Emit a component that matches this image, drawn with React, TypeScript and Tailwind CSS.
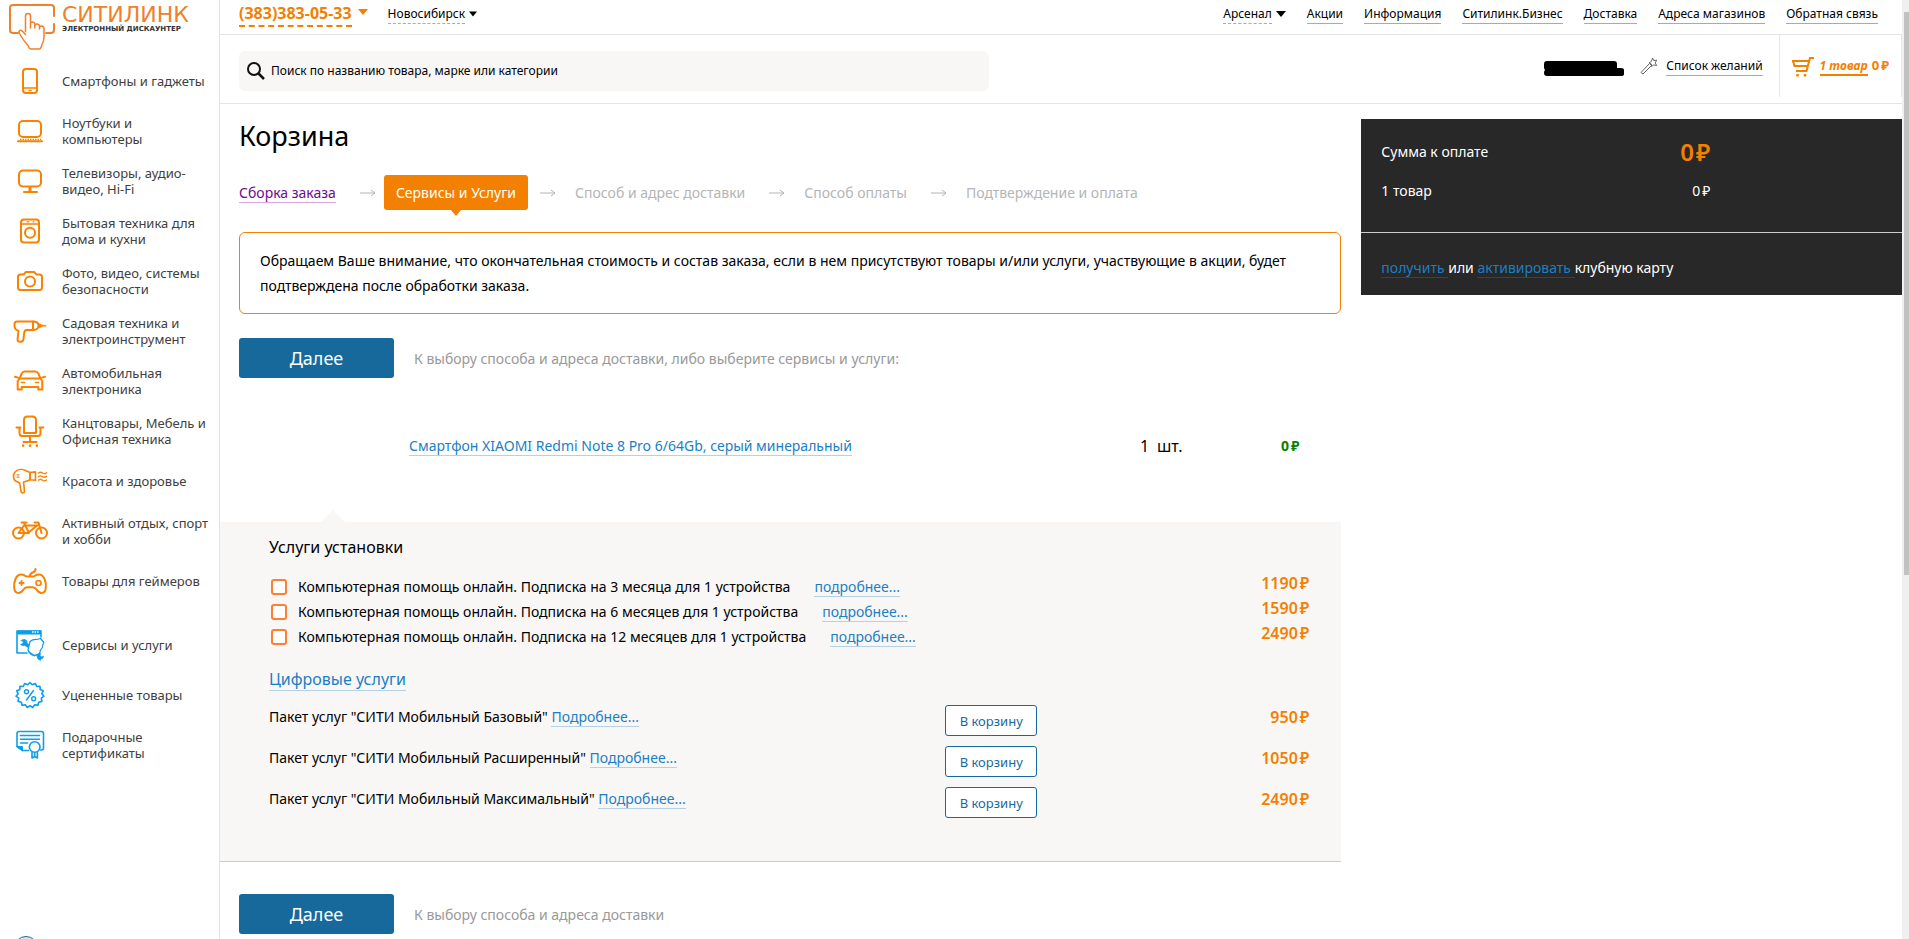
import type { ReactNode } from "react";

type Item = { label: string; icon: ReactNode };

const categories: Item[] = [
  {
    label: "Смартфоны и гаджеты",
    icon: (
      <>
        <rect x="13" y="8" width="14" height="24" rx="3" />
        <path d="M13 27h14M19 29.500h2" strokeWidth="1.500" />
      </>
    ),
  },
  {
    label: "Ноутбуки и компьютеры",
    icon: (
      <>
        <rect x="9" y="10" width="22" height="16" rx="4" />
        <path d="M10 28.500h21" strokeDasharray="1.500 1" strokeLinecap="butt" strokeWidth="1.500" />
        <path d="M8 30.300h24" />
      </>
    ),
  },
  {
    label: "Телевизоры, аудио-видео, Hi-Fi",
    icon: (
      <>
        <rect x="9" y="9.500" width="22" height="16" rx="4" />
        <path d="M14 31h13" />
        <path d="M20 26v4" strokeWidth="3" strokeLinecap="butt" />
      </>
    ),
  },
  {
    label: "Бытовая техника для дома и кухни",
    icon: (
      <>
        <rect x="11" y="8.500" width="18" height="23" rx="3" />
        <path d="M11 13h18M17 10.800h2M23 10.800h1" strokeWidth="1.300" />
        <circle cx="20" cy="21.700" r="5" />
      </>
    ),
  },
  {
    label: "Фото, видео, системы безопасности",
    icon: (
      <>
        <path d="M10.500 13.500h2.500q1 0 1.500-1l.5-.7q.5-.8 1.500-.8h7q1 0 1.500.8l.5.7q.5 1 1.500 1h2.500q2.500 0 2.500 2.500v10.500q0 2.500-2.500 2.500h-19q-2.500 0-2.500-2.500V16q0-2.500 2.500-2.500z" />
        <circle cx="20" cy="20.500" r="5" />
      </>
    ),
  },
  {
    label: "Садовая техника и электроинструмент",
    icon: (
      <>
        <path d="M7 10.500h16c3 0 5.500 1.500 5.500 4.200s-2.500 4.300-5.500 4.300h-6c-1.800 0-2.500.8-2.700 2.500l-.8 6.500c-.2 2-.8 2.700-2.500 2.700h-1c-1.800 0-2.600-.8-2.400-2.700l.9-8C6 19 4.500 17.500 4.500 15v-2c0-1.700.8-2.500 2.500-2.500z" />
        <path d="M23 10.500V19" />
        <path d="M29 12.500l4 1.800h3v1h-3l-4 1.700z" fill="currentColor" strokeWidth=".5" />
      </>
    ),
  },
  {
    label: "Автомобильная электроника",
    icon: (
      <>
        <path d="M9.500 17.500l2.200-5q.8-2 3-2h10.600q2.200 0 3 2l2.200 5" />
        <path d="M5 15.800l3 .8M35 15.800l-3 .8" />
        <path d="M9.500 17.500h21l1.800 2.500v8.500h-4V26H11.700v2.500h-4V20z" />
        <path d="M11.500 21.500h3M25.500 21.500h3" strokeWidth="1.500" />
      </>
    ),
  },
  {
    label: "Канцтовары, Мебель и Офисная техника",
    icon: (
      <>
        <path d="M14 22V9q0-3.500 3.500-3.500h5Q26 5.500 26 9v13z" />
        <path d="M6.500 16.500h4M29.500 16.500h4M9.500 16.500v5.500q0 3 2.500 3h16q2.500 0 2.500-3v-5.500M20 25v5M13.500 31h13" />
        <path d="M13.200 34.500v.2M20 34.500v.2M26.800 34.500v.2" strokeWidth="2.500" />
      </>
    ),
  },
  {
    label: "Красота и здоровье",
    icon: (
      <>
        <path d="M20 11.500l-4-1.700c-3.500-1.800-8-1.800-10.500.7-3 3-2.500 7.500.2 9.500l4 2 1.300 8.500q.4 1.500 2 1.300 1.600-.2 1.400-1.800L13.600 21c2-.3 4-1.200 6.400-2.300z" strokeWidth="1.600" />
        <path d="M20 11.500v7.200l5.500.6v-8.400z" strokeWidth="1.600" />
        <path d="M7 13.800h2M7 16.200h2" strokeWidth="1.200" />
        <path d="M28.500 12q2-1.500 4 0t4-.3M28.500 15.600q2-1.500 4 0t4-.3M28.500 19.200q2-1.500 4 0t4-.3" strokeWidth="1.300" />
      </>
    ),
  },
  {
    label: "Активный отдых, спорт и хобби",
    icon: (
      <>
        <circle cx="8.500" cy="22" r="5.500" />
        <circle cx="31.500" cy="22" r="5.500" />
        <path d="M8.500 22l5.500-7.500h13.500M8.500 22H18l9-7.500M14 12l5 10M11.500 11.500h5M24.500 11.500h4l3 10.500" />
      </>
    ),
  },
  {
    label: "Товары для геймеров",
    icon: (
      <>
        <path d="M11 13.500q2.500 0 4 1.200 1 .8 2.200.8h5.600q1.200 0 2.200-.8 1.500-1.200 4-1.200c5 0 7.500 7.500 6.800 13.500-.3 3-2 5-4.300 5-2 0-3.500-1.200-5-3.500-1-1.500-2-2.200-3.800-2.200h-5.400c-1.800 0-2.800.7-3.800 2.200-1.500 2.300-3 3.500-5 3.500-2.300 0-4-2-4.300-5C3.500 21 6 13.500 11 13.500z" />
        <path d="M20 15c0-5 5.500-2 5.500-7M11.500 20v4M9.500 22h4" />
        <circle cx="28.500" cy="22" r="2.500" strokeWidth="1.600" />
      </>
    ),
  },
];

const extras: Item[] = [
  {
    label: "Сервисы и услуги",
    icon: (
      <>
        <path d="M17 28H7V6h24v6" strokeWidth="1.600" />
        <path d="M7 7.500h24" strokeWidth="4" strokeLinecap="butt" />
        <path d="M22 7h7" stroke="white" strokeWidth="1.500" strokeDasharray="1.500 1" strokeLinecap="butt" />
        <path d="M11 15.500q3.500-2.500 5.500 0 1 1.500.5 2.500l2.500 2-2 2.500-2.500-2q-3 .8-4.500-1l2.500-1.200.2-1.500z" fill="currentColor" strokeWidth=".5" />
        <path d="M20 16.500q3-2.500 7-2l3.500-1 3.300 4-1 2.500q0 3-2.300 5l-1 4-6 1.500q-4-1.500-5.500-5.500z" strokeWidth="1.200" fill="white" />
        <path d="M19 27l5.500 3.800 4.500-1.800" strokeWidth="1.200" />
        <path d="M27 31q0-2.500 2.500-3l1.200.8-.7 1.700 1.500 1.200 2-.7q.2 3-2.500 3l-.5 1.500q-3.500-1-3.500-4.500z" fill="currentColor" strokeWidth=".5" />
      </>
    ),
  },
  {
    label: "Уцененные товары",
    icon: (
      <>
        <path d="M20 7.500l2.400 2.300 3-1.300 1.300 3 3.300-.3.200 3.300 3 1.300-1.400 3 2.200 2.400-2.700 2 .6 3.200-3.200.8-.8 3.200-3.200-.6-2 2.700-2.700-1.900-2.700 1.900-2-2.700-3.200.6-.8-3.200-3.200-.8.6-3.200-2.700-2L8.200 18.800l-1.400-3 3-1.300.2-3.300 3.300.3 1.300-3 3 1.300z" strokeWidth="1.600" />
        <circle cx="16.500" cy="16.800" r="2" strokeWidth="1.400" />
        <circle cx="23.700" cy="23.700" r="2" strokeWidth="1.400" />
        <path d="M23.500 15.500l-7 9.500" strokeWidth="1.400" />
      </>
    ),
  },
  {
    label: "Подарочные сертификаты",
    icon: (
      <>
        <path d="M18.500 25.500h-6l-5.500-4V8.500q0-2 2-2h22.500q2 0 2 2V23q0 2-2 2h-1" strokeWidth="1.600" />
        <path d="M7 21.500h5.500v4z" fill="currentColor" strokeWidth="1" />
        <path d="M10.500 10.500h19M10.500 14.200h19M10.500 18h7" strokeWidth="1.600" />
        <circle cx="24.700" cy="22" r="5.300" strokeWidth="1.600" />
        <path d="M22 27.500V33l2.700-1.500 2.700 1.500v-5.500M24.700 28v3.500" strokeWidth="1.600" />
      </>
    ),
  },
];

const topLinks = ["Акции", "Информация", "Ситилинк.Бизнес", "Доставка", "Адреса магазинов", "Обратная связь"];

const nextSteps = ["Способ и адрес доставки", "Способ оплаты", "Подтверждение и оплата"];

const installServices = [
  { id: "help-3", name: "Компьютерная помощь онлайн. Подписка на 3 месяца для 1 устройства", price: 1190 },
  { id: "help-6", name: "Компьютерная помощь онлайн. Подписка на 6 месяцев для 1 устройства", price: 1590 },
  { id: "help-12", name: "Компьютерная помощь онлайн. Подписка на 12 месяцев для 1 устройства", price: 2490 },
];

const digitalServices = [
  { name: 'Пакет услуг "СИТИ Мобильный Базовый"', price: 950 },
  { name: 'Пакет услуг "СИТИ Мобильный Расширенный"', price: 1050 },
  { name: 'Пакет услуг "СИТИ Мобильный Максимальный"', price: 2490 },
];

const CategoryList = ({ items }: { items: Item[] }) => (
  <ul>
    {items.map((item) => (
      <li key={item.label}>
        <a href="#" className="flex h-[50px] items-center gap-3 pl-2.5 pr-2 text-[13px] leading-4 text-[#404040]">
          <svg
            viewBox="0 0 40 40"
            className="h-10 w-10 shrink-0"
            fill="none"
            stroke="currentColor"
            strokeWidth="2"
            strokeLinecap="round"
            strokeLinejoin="round"
          >
            {item.icon}
          </svg>
          <span className="flex-1">{item.label}</span>
        </a>
      </li>
    ))}
  </ul>
);

const Logo = () => (
  <a href="#" className="flex h-14 items-start gap-1.5 pl-2 pt-1">
    <svg viewBox="0 0 48 48" className="h-12 w-12 shrink-0" fill="none" stroke="#f0802a" strokeWidth="2" strokeLinecap="round" strokeLinejoin="round">
      <path d="M46 12V4q0-3-3-3H5Q2 1 2 4v22q0 3 3 3h5M46 20v6q0 3-3 3h-5" />
      <path
        d="M17.500 27.500V12q0-2.500 2.500-2.500t2.500 2.500v11M22.500 24v-4.500q0-1.500 2-1.500t2.300 2v4M26.800 22q0-2 2.200-2t2.500 2v3M31.500 24q0-2 2-2t2.500 2.500V33q0 4-2 7.500l-1 3q-.5 1.500-2 1.500h-8q-1.500 0-2-1.500c-.8-2-1.500-3-3-4.500-2.500-2.500-4-5-6.500-9.500-1.500-3 .8-4 3-2.200l3 3.200"
        strokeWidth="1.500"
      />
    </svg>
    <span className="flex flex-col pt-px font-['DejaVu_Sans',sans-serif]">
      <span className="text-[22px] leading-5 text-[#f0802a]">СИТИЛИНК</span>
      <span className="text-[7px] font-bold leading-2 text-[#333]">ЭЛЕКТРОННЫЙ ДИСКАУНТЕР</span>
    </span>
  </a>
);

const Caret = ({ className }: { className: string }) => (
  <svg viewBox="0 0 10 6" className={className} fill="currentColor">
    <path d="M0 0h10L5 6z" />
  </svg>
);

const StepArrow = () => (
  <svg viewBox="0 0 16 8" className="h-2 w-4 shrink-0 text-[#b5b5b5]" fill="none" stroke="currentColor">
    <path d="M0 4h15M11 1l4 3-4 3" />
  </svg>
);

const Price = ({ value }: { value: number }) => (
  <>
    {value}
    <span className="ml-0.5">₽</span>
  </>
);

const NextButton = ({ hint }: { hint: string }) => (
  <div className="flex items-center gap-5">
    <button type="button" className="h-10 w-[155px] rounded-[3px] bg-[#17699c] text-[18px] leading-[26px] text-white">
      Далее
    </button>
    <span className="text-[14px] text-[#999]">{hint}</span>
  </div>
);

const MoreLink = ({ children }: { children: ReactNode }) => (
  <a href="#" className="border-b border-[#b3d2e8] text-[#1b7fc4]">
    {children}
  </a>
);

const Header = () => (
  <header>
    <div className="flex h-[35px] items-start justify-between border-b border-[#e4e4e4] pl-[19px] pr-6 pt-[5px] text-[12px] leading-[18px]">
      <div className="flex items-start gap-5">
        <button type="button" className="flex items-start gap-1.5 text-[#f38000]">
          <span className="border-b-2 border-dashed border-[#f38000] pb-1 text-[16px] font-bold leading-4">
            (383)383-05-33
          </span>
          <Caret className="mt-1 h-1.5 w-2.5" />
        </button>
        <button type="button" className="flex items-start gap-1">
          <span className="border-b border-dashed border-[#aaa]">Новосибирск</span>
          <Caret className="mt-1.5 h-1.5 w-2" />
        </button>
      </div>
      <nav className="flex gap-[21px]">
        <button type="button" className="flex items-start gap-1">
          <span className="border-b border-dashed border-[#aaa]">Арсенал</span>
          <Caret className="mt-1.5 h-1.5 w-2.5" />
        </button>
        {topLinks.map((link) => (
          <a key={link} href="#" className="border-b border-[#aaa]">
            {link}
          </a>
        ))}
      </nav>
    </div>

    <div className="flex h-[69px] justify-between border-b border-[#e4e4e4] pl-[19px]">
      <label className="mt-4 flex h-10 w-[750px] items-center gap-1.5 rounded-md bg-[#f8f7f6] pl-2">
        <svg viewBox="0 0 18 18" className="h-[18px] w-[18px]" fill="none" stroke="#111" strokeWidth="2">
          <circle cx="7" cy="7" r="6" />
          <path d="M11.500 11.500l5.500 5.500" strokeWidth="2.500" />
        </svg>
        <input
          type="search"
          aria-label="Поиск"
          placeholder="Поиск по названию товара, марке или категории"
          className="flex-1 bg-transparent text-[12px] outline-none placeholder:text-black"
        />
      </label>
      <div className="flex">
        <div className="flex items-start pt-[22px] text-[12px] leading-[18px]">
          <svg viewBox="0 0 80 18" className="mt-0.5 h-[18px] w-20">
            <path d="M3 2h67q3 0 3 3v4h4q3 0 3 2v4q0 2-3 2H3q-3 0-3-3 0-2 1-3-1-1-1-3V5q0-3 3-3z" />
          </svg>
          <svg viewBox="0 0 18 18" className="ml-4 h-[18px] w-[18px]" fill="none" stroke="#666">
            <path d="M1 15.500l8.500-9 2 2L3 17z" />
            <path d="M12.500 1l1.200 2.500 3-.3-1.500 2.700 1.500 2.600-3-.5-2.200 1.500-.2-2.500-2.300-1 2.500-1.700z" />
          </svg>
          <a href="#" className="ml-2 border-b border-[#aaa]">
            Список желаний
          </a>
        </div>
        <a
          href="#"
          className="ml-4 flex h-[62px] items-start border-x border-[#e8e8e8] px-3 pt-[22px] text-[#f38000]"
        >
          <svg viewBox="0 0 22 20" className="h-5 w-[22px]" fill="none" stroke="currentColor" strokeWidth="2">
            <path d="M22 1h-4l-3.500 13H4M0 4h17M1 4l1.500 5H15.500" />
            <path d="M5.500 17v2.500M13 17v2.500" strokeWidth="2.500" />
          </svg>
          <span className="ml-1.5 border-b-2 border-[#f38000] text-[12px] font-bold italic leading-[17px]">1 товар</span>
          <span className="ml-1 text-[13px] font-bold leading-[17px]">
            <Price value={0} />
          </span>
        </a>
      </div>
    </div>
  </header>
);

const Steps = () => (
  <ol className="mt-[18px] flex h-[35px] items-center text-[14px] text-[#b5b5b5]">
    <li>
      <a href="#" className="border-b border-[#d8a9e0] text-[#6f0c8e]">
        Сборка заказа
      </a>
    </li>
    <li className="ml-6 mr-3 flex items-center gap-2">
      <StepArrow />
      <span className="relative flex h-[35px] items-center rounded-[3px] bg-[#f38000] px-3 text-white">
        Сервисы и Услуги
        <Caret className="absolute left-1/2 top-full h-1.5 w-3 -translate-x-1/2 text-[#f38000]" />
      </span>
    </li>
    {nextSteps.map((step) => (
      <li key={step} className="mr-6 flex items-center gap-[19px]">
        <StepArrow />
        {step}
      </li>
    ))}
  </ol>
);

const Services = () => (
  <section className="relative mt-[63px] border-b border-[#ccc] bg-[#f8f7f6] pb-[43px] pl-[49px] pr-8 pt-3 text-[14px]">
    <svg viewBox="0 0 24 12" className="absolute bottom-full left-[101px] h-3 w-6" fill="#f8f7f6">
      <path d="M12 0l12 12H0z" />
    </svg>
    <h2 className="text-[16px] leading-[26px]">Услуги установки</h2>
    <ul className="mt-3.5">
      {installServices.map((service) => (
        <li key={service.id} className="flex h-[25px] items-center">
          <input
            id={service.id}
            type="checkbox"
            className="ml-0.5 h-4 w-4 appearance-none rounded-[3px] border-2 border-[#ff7f32] bg-white"
          />
          <label htmlFor={service.id} className="ml-[11px] mr-6">
            {service.name}
          </label>
          <span>
            <MoreLink>подробнее...</MoreLink>
          </span>
          <span className="ml-auto pb-2 text-[16px] font-semibold text-[#f38000]">
            <Price value={service.price} />
          </span>
        </li>
      ))}
    </ul>
    <h2 className="mt-[18px] text-[16px] leading-6">
      <MoreLink>Цифровые услуги</MoreLink>
    </h2>
    <ul className="mt-3.5 flex flex-col gap-2.5">
      {digitalServices.map((service) => (
        <li key={service.name} className="grid grid-cols-[65%_1fr_auto] items-start leading-6">
          <span>
            {service.name} <MoreLink>Подробнее...</MoreLink>
          </span>
          <button
            type="button"
            className="h-[31px] w-[92px] rounded-[3px] border border-[#17699c] bg-white text-[13px] text-[#17699c]"
          >
            В корзину
          </button>
          <span className="text-[16px] font-semibold text-[#f38000]">
            <Price value={service.price} />
          </span>
        </li>
      ))}
    </ul>
  </section>
);

const Summary = () => (
  <aside className="mt-[15px] flex-1 self-start bg-[#282828] text-[14px] text-white">
    <dl className="grid w-[349px] grid-cols-[1fr_auto] items-center pb-[23px] pl-5 pt-3">
      <dt className="leading-[42px]">Сумма к оплате</dt>
      <dd className="text-[24px] font-semibold leading-[42px] text-[#f38000]">
        <Price value={0} />
      </dd>
      <dt className="leading-[36px]">1 товар</dt>
      <dd className="text-right leading-[36px]">
        <Price value={0} />
      </dd>
    </dl>
    <p className="border-t border-[#ccc] pb-4 pl-5 pt-6 leading-[22px]">
      <a href="#" className="border-b border-[#1f4a68] text-[#1b7fc4]">
        получить{" "}
      </a>
      или{" "}
      <a href="#" className="border-b border-[#1f4a68] text-[#1b7fc4]">
        активировать{" "}
      </a>
      клубную карту
    </p>
  </aside>
);

export default function App() {
  return (
    <div className="flex min-h-screen bg-white font-['Noto_Sans',sans-serif] text-black">
      <aside className="w-[220px] shrink-0 border-r border-[#e4e4e4]">
        <Logo />
        <nav className="[&_svg]:text-[#f98200]">
          <CategoryList items={categories} />
        </nav>
        <nav className="mt-3.5 [&_svg]:text-[#0d9ee8]">
          <CategoryList items={extras} />
        </nav>
      </aside>

      <div className="min-w-0 flex-1">
        <Header />
        <div className="flex gap-5">
          <main className="w-2/3">
            <div className="pl-[19px]">
              <h1 className="pt-2.5 text-[27px] leading-[43px]">Корзина</h1>
              <Steps />
              <p className="mb-6 mt-[22px] rounded-md border border-[#f38000] px-5 py-[15px] text-[14px] leading-[25px]">
                Обращаем Ваше внимание, что окончательная стоимость и состав заказа, если в нем присутствуют товары и/или
                услуги, участвующие в акции, будет подтверждена после обработки заказа.
              </p>
              <NextButton hint="К выбору способа и адреса доставки, либо выберите сервисы и услуги:" />
              <div className="mt-[55px] flex items-center pl-[170px] pr-[42px] text-[14px] leading-[26px]">
                <span>
                  <MoreLink>Смартфон XIAOMI Redmi Note 8 Pro 6/64Gb, серый минеральный</MoreLink>
                </span>
                <span className="ml-auto flex w-[141px] items-center gap-2 text-[16px]">
                  <span>1</span> шт.
                </span>
                <span className="font-bold text-[#0a8200]">
                  <Price value={0} />
                </span>
              </div>
            </div>
            <Services />
            <div className="pl-[19px] pt-8">
              <NextButton hint="К выбору способа и адреса доставки" />
            </div>
          </main>
          <Summary />
        </div>
      </div>

      {/* Scrollbar track */}
      <div className="w-[7px] shrink-0 bg-[#f0f0f0] pl-0.5 pt-3">
        <div className="h-[60vh] bg-[#c1c1c1]" />
      </div>

      {/* Chat bubble peeking from the bottom edge */}
      <div className="fixed -bottom-[21px] left-3.5 h-6 w-6 rounded-full border border-[#17699c] bg-[#dbe6f0]" />
    </div>
  );
}
